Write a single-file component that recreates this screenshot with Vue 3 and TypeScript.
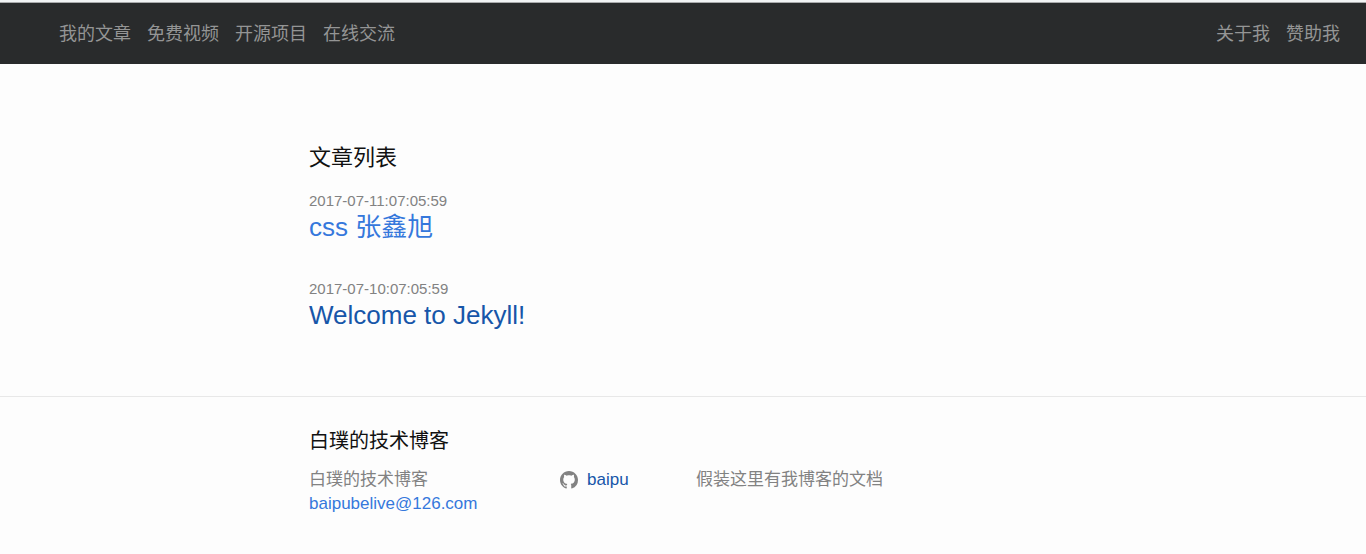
<script setup lang="ts">
interface NavItem { label: string }
interface Post { date: string; title: string; tone: string }

const mainNav: NavItem[] = [
  { label: '我的文章' },
  { label: '免费视频' },
  { label: '开源项目' },
  { label: '在线交流' },
]
const sideNav: NavItem[] = [{ label: '关于我' }, { label: '赞助我' }]
const posts: Post[] = [
  { date: '2017-07-11:07:05:59', title: 'css 张鑫旭', tone: 'fresh' },
  { date: '2017-07-10:07:05:59', title: 'Welcome to Jekyll!', tone: 'visited' },
]
</script>

<template>
  <div class="page">
    <header class="navbar">
      <nav class="group">
        <a v-for="item in mainNav" :key="item.label" href="#">{{ item.label }}</a>
      </nav>
      <nav class="group">
        <a v-for="item in sideNav" :key="item.label" href="#">{{ item.label }}</a>
      </nav>
    </header>

    <main class="wrapper">
      <h1>文章列表</h1>
      <ul class="posts">
        <li v-for="post in posts" :key="post.date">
          <time>{{ post.date }}</time>
          <h2><a :class="post.tone" href="#">{{ post.title }}</a></h2>
        </li>
      </ul>
    </main>

    <footer>
      <div class="wrapper">
        <h2>白璞的技术博客</h2>
        <div class="columns">
          <ul class="contact">
            <li>白璞的技术博客</li>
            <li><a class="fresh" href="#">baipubelive@126.com</a></li>
          </ul>
          <a class="github" href="#">
            <svg viewBox="0 0 16 16" aria-hidden="true">
              <path d="M8 0C3.58 0 0 3.58 0 8c0 3.54 2.29 6.53 5.47 7.59.4.07.55-.17.55-.38 0-.19-.01-.82-.01-1.49-2.01.37-2.53-.49-2.69-.94-.09-.23-.48-.94-.82-1.13-.28-.15-.68-.52-.01-.53.63-.01 1.08.58 1.23.82.72 1.21 1.87.87 2.33.66.07-.52.28-.87.51-1.07-1.78-.2-3.64-.89-3.64-3.95 0-.87.31-1.59.82-2.15-.08-.2-.36-1.02.08-2.12 0 0 .67-.21 2.2.82.64-.18 1.32-.27 2-.27s1.36.09 2 .27c1.53-1.04 2.2-.82 2.2-.82.44 1.1.16 1.92.08 2.12.51.56.82 1.27.82 2.15 0 3.07-1.87 3.75-3.65 3.95.29.25.54.73.54 1.48 0 1.07-.01 1.93-.01 2.2 0 .21.15.46.55.38A8.01 8.01 0 0 0 16 8c0-4.42-3.58-8-8-8z" />
            </svg>
            <span>baipu</span>
          </a>
          <p>假装这里有我博客的文档</p>
        </div>
      </div>
    </footer>
  </div>
</template>

<style>
body {
  margin: 0;
  background: #fdfdfd;
}
</style>

<style scoped>
.page {
  border-top: 2px solid #f1f3f4;
  font-family: "Liberation Sans", "Noto Sans CJK SC", sans-serif;
  font-size: 17px;
  line-height: 24px;
  font-weight: 400;
  color: #111;
}
h1, h2, p, ul {
  margin: 0;
  padding: 0;
  font-weight: 400;
}
ul {
  list-style: none;
}
a {
  text-decoration: none;
}
.navbar {
  padding: 17px 26px 16px 59px;
  display: flex;
  align-items: center;
  justify-content: space-between;
  border-top: 1px solid #a9abac;
  background: #292b2c;
}
.group {
  display: flex;
  gap: 16px;
}
.group a {
  font-size: 18px;
  line-height: 28px;
  color: #949595;
}
.wrapper {
  max-width: 748px;
  margin: 0 auto;
}
main {
  padding: 78px 0 66px;
}
h1 {
  font-size: 22px;
  line-height: 32px;
  margin-bottom: 16px;
}
.posts {
  display: grid;
  gap: 36px;
}
time {
  display: block;
  font-size: 15px;
  line-height: 22px;
  color: #828282;
}
.posts h2 {
  font-size: 26px;
  line-height: 30px;
}
.fresh {
  color: #3578dc;
}
.visited {
  color: #1756a9;
}
footer {
  padding: 29px 0 38px;
  border-top: 1px solid #e8e8e8;
}
footer h2 {
  font-size: 20px;
  line-height: 30px;
  margin-bottom: 12px;
}
.columns {
  display: grid;
  grid-template-columns: 251px 136px 1fr;
  align-items: start;
  color: #828282;
}
.github {
  display: flex;
  align-items: center;
  gap: 9px;
  color: #1756a9;
}
.github svg {
  width: 18px;
  height: 18px;
  fill: #828282;
}
</style>
